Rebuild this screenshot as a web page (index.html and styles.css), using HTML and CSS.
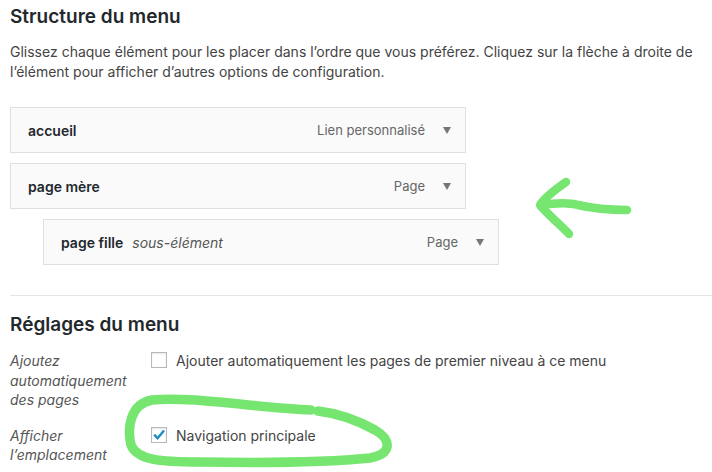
FILE: index.html
```html
<!DOCTYPE html>
<html lang="fr">
<head>
<meta charset="utf-8">
<title>Structure du menu</title>
<link rel="stylesheet" href="styles.css">
</head>
<body>
<main class="page">
  <h2 class="title">Structure du menu</h2>
  <p class="desc">Glissez chaque élément pour les placer dans l’ordre que vous préférez. Cliquez sur la flèche à droite de l’élément pour afficher d’autres options de configuration.</p>

  <ul class="menu-list">
    <li class="item">
      <div class="handle">
        <span class="item-title">accueil</span>
        <span class="controls"><span class="type">Lien personnalisé</span><span class="toggle"></span></span>
      </div>
    </li>
    <li class="item">
      <div class="handle">
        <span class="item-title">page mère</span>
        <span class="controls"><span class="type">Page</span><span class="toggle"></span></span>
      </div>
    </li>
    <li class="item sub">
      <div class="handle">
        <span class="item-title">page fille</span><span class="sub-label">sous-élément</span>
        <span class="controls"><span class="type">Page</span><span class="toggle"></span></span>
      </div>
    </li>
  </ul>

  <hr class="divider">

  <h3 class="title title-settings">Réglages du menu</h3>
  <div class="settings">
    <div class="label">Ajoutez automatiquement des pages</div>
    <div class="field">
      <span class="checkbox"></span>
      <span class="field-text">Ajouter automatiquement les pages de premier niveau à ce menu</span>
    </div>
    <div class="label">Afficher l’emplacement</div>
    <div class="field">
      <span class="checkbox">
        <svg class="check" viewBox="0 0 16 16" width="16" height="16"><path d="M3.2 7.6 L6.6 11.2 L13 3.6" fill="none" stroke="#1e8cbe" stroke-width="2.4" stroke-linecap="butt" stroke-linejoin="miter"/></svg>
      </span>
      <span class="field-text">Navigation principale</span>
    </div>
  </div>

  <svg class="annotations" viewBox="0 0 712 472" width="712" height="472">
    <g fill="none" stroke="#76e670" stroke-width="8.5" stroke-linecap="round" stroke-linejoin="round">
      <path d="M566 182 C 556 189, 545 197, 540 205 C 548 215, 560 224, 569 234"/>
      <path d="M541 205 C 555 203, 568 202, 578 205 C 595 209, 612 210, 627 210"/>
      <path d="M311 410 C 260 408, 190 396, 152 400 C 130 404, 127 428, 131 445 C 137 460, 160 462, 200 462 C 260 463, 330 462, 370 458 C 392 454, 392 440, 375 430 C 355 419, 335 413, 318 411" stroke-width="9.5"/>
    </g>
  </svg>
</main>
</body>
</html>
```

FILE: styles.css
```css
* { box-sizing: border-box; }

body {
  margin: 0;
  background: #fff;
  color: #444;
  font-family: Inter, "Noto Sans", sans-serif;
  font-size: 14px;
}

.page {
  position: relative;
  height: 472px;
  overflow: hidden;
  padding-left: 10px;
}

.title {
  margin: 0;
  padding-top: 5px;
  font-size: 19px;
  line-height: 24px;
  font-weight: 600;
  color: #23282d;
}

.desc {
  width: 700px;
  margin: 13px 0 0;
  font-size: 14px;
  line-height: 20px;
  color: #444;
}

.menu-list {
  list-style: none;
  margin: 25px 0 0;
  padding: 0;
  display: flex;
  flex-direction: column;
  gap: 10px;
}

.item { width: 456px; }
.item.sub { margin-left: 33px; }

.handle {
  height: 46px;
  display: flex;
  align-items: center;
  padding: 0 14px 0 17px;
  border: 1px solid #dfdfdf;
  background: #fafafa;
}

.item-title {
  font-size: 14px;
  font-weight: 600;
  color: #23282d;
}

.sub-label {
  margin-left: 9px;
  font-style: italic;
  color: #555;
}

.controls {
  margin-left: auto;
  display: flex;
  align-items: center;
  gap: 18px;
}

.type {
  font-size: 13px;
  color: #666;
}

.toggle {
  width: 0;
  height: 0;
  border-left: 4.5px solid transparent;
  border-right: 4.5px solid transparent;
  border-top: 7px solid #72777c;
}

.divider {
  margin: 30px 0 0;
  border: 0;
  border-top: 1px solid #e5e5e5;
  height: 0;
}

.title-settings {
  padding-top: 17px;
}

.settings {
  margin-top: 14px;
  display: grid;
  grid-template-columns: 131px 1fr;
  column-gap: 10px;
  row-gap: 16px;
}

.label {
  font-style: italic;
  line-height: 19.5px;
  color: #555;
}

.field {
  display: flex;
  align-items: flex-start;
  gap: 9px;
  line-height: 19.5px;
}

.checkbox {
  flex: none;
  position: relative;
  width: 16px;
  height: 16px;
  margin-top: 1px;
  border: 1px solid #b4b9be;
  background: #fff;
  box-shadow: inset 0 1px 2px rgba(0, 0, 0, 0.1);
}

.check {
  position: absolute;
  left: -1px;
  top: -1px;
}

.field-text { color: #444; }

.annotations {
  position: absolute;
  left: 0;
  top: 0;
  pointer-events: none;
}
```
